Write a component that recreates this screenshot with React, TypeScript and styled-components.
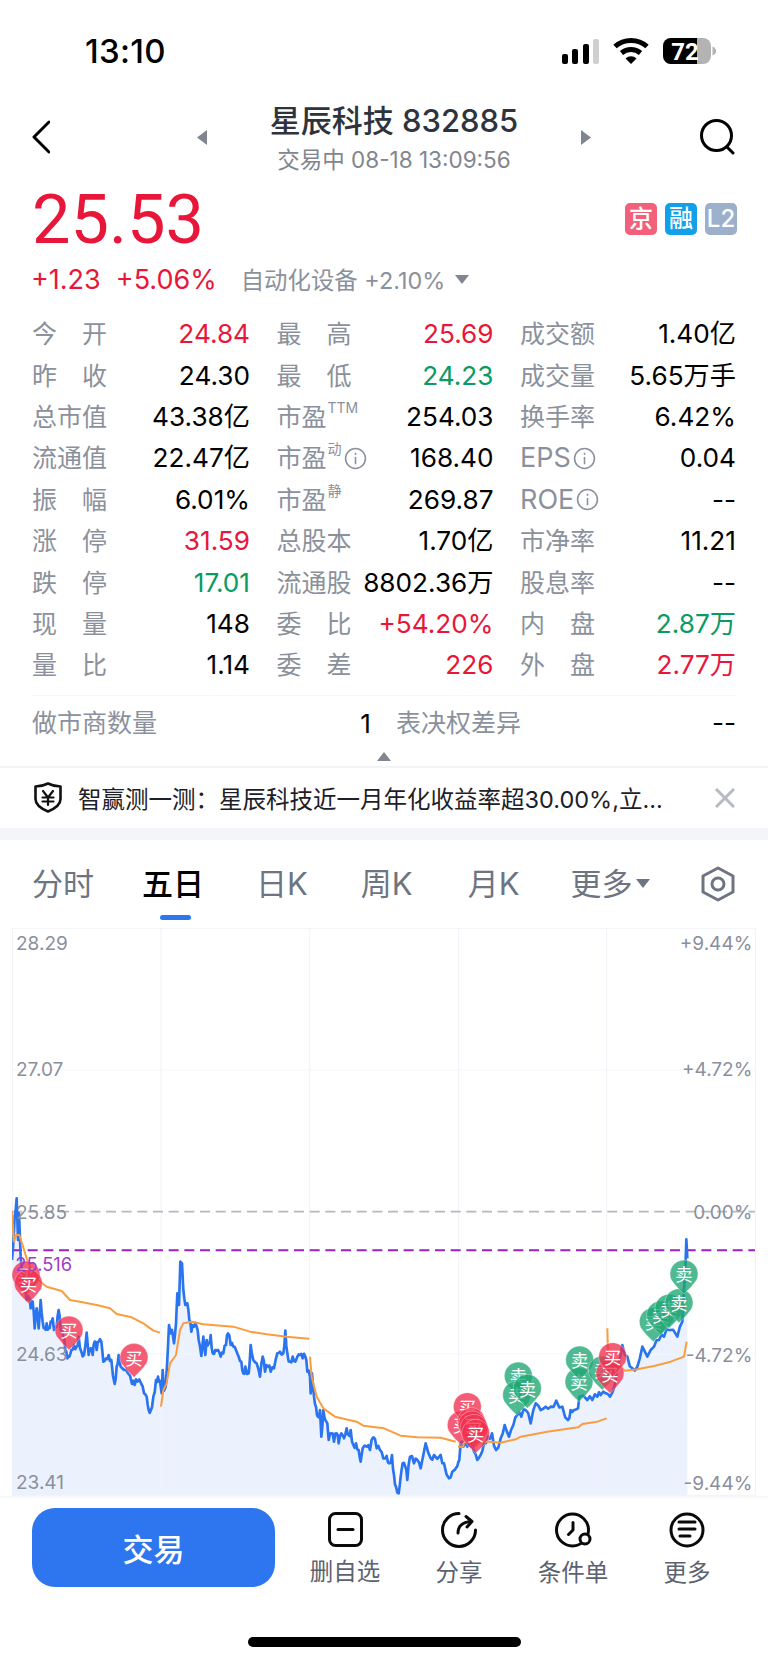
import React from "react";
import styled, { createGlobalStyle } from "styled-components";

const RED = "#e8173a";
const GREEN = "#0b9a63";
const GRAY = "#8b919c";
const FONT = `Inter, "Noto Sans CJK SC", sans-serif`;

const GlobalStyle = createGlobalStyle`
  html, body {
    margin: 0;
    padding: 0;
    background: #fff;
  }
  body {
    font-family: ${FONT};
  }
`;

const Page = styled.div`
  width: 768px;
  height: 1663px;
  overflow: hidden;
  background: #fff;
  display: flex;
  flex-direction: column;
`;

/* status bar */
const StatusBar = styled.div`
  height: 100px;
  padding: 0 52px 0 85px;
  display: flex;
  justify-content: space-between;
  align-items: flex-start;
  box-sizing: border-box;
`;

const Clock = styled.div`
  margin-top: 31px;
  font-size: 33px;
  line-height: 40px;
  font-weight: 500;
  letter-spacing: 0.3px;
  color: #000;
`;

const StatusIcons = styled.svg`
  display: block;
  margin-top: 37px;
`;

/* header */
const Header = styled.div`
  height: 78px;
  padding: 0 33px 4px 32px;
  display: flex;
  align-items: center;
  box-sizing: border-box;
`;

const IconSvg = styled.svg`
  display: block;
  flex: none;
`;

const TitleGroup = styled.div`
  width: 394px;
  margin-left: 147px;
  display: flex;
  justify-content: space-between;
  align-items: center;
`;

const TitleBlock = styled.div`
  display: flex;
  flex-direction: column;
  align-items: center;
`;

const Title = styled.div`
  font-size: 31px;
  line-height: 44px;
  font-weight: 500;
  color: #2e343d;
  white-space: nowrap;
`;

const SubTitle = styled.div`
  font-size: 22.5px;
  line-height: 30px;
  margin-top: 2px;
  color: #7f8690;
  white-space: nowrap;
`;

const Tail = styled.div`
  margin-left: auto;
`;

/* price */
const PriceRow = styled.div`
  height: 86px;
  padding: 0 31px 0 32px;
  display: flex;
  justify-content: space-between;
  align-items: center;
`;

const Price = styled.div`
  font-family: Roboto, sans-serif;
  font-size: 68.5px;
  line-height: 80px;
  margin-top: -2px;
  color: ${RED};
`;

const Badges = styled.div`
  display: flex;
  gap: 8px;
  margin-top: -4px;
`;

const Badge = styled.div<{ $bg: string }>`
  width: 32px;
  height: 32px;
  border-radius: 5px;
  background: ${(p) => p.$bg};
  color: #fff;
  font-size: 24px;
  font-weight: 500;
  line-height: 32px;
  text-align: center;
  overflow: hidden;
`;

const ChangeRow = styled.div`
  height: 30px;
  padding-left: 31px;
  display: flex;
  align-items: center;
  font-size: 27px;
  color: ${RED};
  white-space: nowrap;
`;

const Percent = styled.span`
  margin-left: 15px;
`;

const Sector = styled.span`
  margin-left: 24px;
  font-size: 23.4px;
  color: ${GRAY};
`;

const SectorArrow = styled.span`
  margin-left: 10px;
  width: 0;
  height: 0;
  border-left: 7px solid transparent;
  border-right: 7px solid transparent;
  border-top: 9px solid #7f8690;
`;

/* quote table */
const Table = styled.div`
  margin-top: 19.5px;
  padding: 0 32px;
  display: grid;
  grid-template-columns: 218px 217px 216px;
  column-gap: 26.5px;
  grid-auto-rows: 41.4px;
`;

const Cell = styled.div`
  display: flex;
  justify-content: space-between;
  align-items: center;
  white-space: nowrap;
`;

const Label = styled.div<{ $spread?: boolean }>`
  display: flex;
  align-items: center;
  justify-content: ${(p) => (p.$spread ? "space-between" : "flex-start")};
  width: ${(p) => (p.$spread ? "75px" : "auto")};
  font-size: 25px;
  line-height: 30px;
  color: ${GRAY};
`;

const Latin = styled.span`
  font-size: 27px;
`;

const Tag = styled.sup`
  font-size: 14px;
  line-height: 14px;
  align-self: flex-start;
  margin-top: -1px;
  margin-left: 1px;
  color: ${GRAY};
`;

const Value = styled.div<{ $tone?: "up" | "down" }>`
  font-size: 26.2px;
  line-height: 30px;
  color: ${(p) => (p.$tone === "up" ? RED : p.$tone === "down" ? GREEN : "#000")};
`;

const ExtraRow = styled.div`
  margin: 8.5px 32px 0 32px;
  height: 55px;
  border-top: 1px solid #f6f7f8;
  display: flex;
  align-items: center;
`;

const ExtraCount = styled.div`
  width: 214px;
  font-size: 26.2px;
  text-align: right;
  color: #000;
`;

const ExtraLabel = styled(Label)`
  margin-left: 25px;
`;

const ExtraDash = styled(Value)`
  margin-left: auto;
`;

const Collapse = styled.div`
  height: 15px;
  display: flex;
  justify-content: center;
  &::before {
    content: "";
    margin-top: 1px;
    width: 0;
    height: 0;
    border-left: 7px solid transparent;
    border-right: 7px solid transparent;
    border-bottom: 9px solid #7f8690;
  }
`;

/* banner */
const Banner = styled.div`
  height: 62px;
  border-top: 2px solid #f3f4f8;
  box-sizing: border-box;
  padding: 0 33px 0 34px;
  display: flex;
  align-items: center;
`;

const BannerText = styled.div`
  margin-left: 16px;
  font-size: 23.5px;
  color: #1d2026;
  white-space: nowrap;
`;

const Band = styled.div`
  height: 12px;
  background: #f4f5f8;
`;

/* tabs */
const Tabs = styled.div`
  height: 88px;
  padding: 0 33px 0 32px;
  display: flex;
  align-items: center;
  box-sizing: border-box;
`;

const Tab = styled.div<{ $active?: boolean; $gap?: number }>`
  position: relative;
  margin-left: ${(p) => p.$gap ?? 0}px;
  font-size: 31px;
  line-height: 44px;
  font-weight: ${(p) => (p.$active ? 500 : 400)};
  color: ${(p) => (p.$active ? "#000" : "#6e7582")};
  white-space: nowrap;
  display: flex;
  align-items: center;
  &::after {
    content: "";
    display: ${(p) => (p.$active ? "block" : "none")};
    position: absolute;
    left: 18px;
    bottom: -14px;
    width: 31px;
    height: 5px;
    border-radius: 3px;
    background: #2d76f0;
  }
`;

const TabArrow = styled.span`
  margin-left: 4px;
  width: 0;
  height: 0;
  border-left: 7px solid transparent;
  border-right: 7px solid transparent;
  border-top: 9px solid #6e7582;
`;

const TabSettings = styled.div`
  margin-left: auto;
`;

/* chart */
const ChartFrame = styled.div`
  height: 568px;
  padding-left: 12px;
`;

const ChartSvg = styled.svg`
  display: block;
  width: 744px;
  height: 568px;
  font-family: ${FONT};
`;

/* footer */
const Footer = styled.div`
  border-top: 2px solid #f6f7fb;
  padding: 10px 0 0 32px;
  display: flex;
  align-items: flex-start;
`;

const TradeButton = styled.div`
  width: 243px;
  height: 79px;
  border-radius: 23px;
  background: #2d76f0;
  color: #fff;
  font-size: 31px;
  font-weight: 500;
  display: flex;
  align-items: center;
  justify-content: center;
  margin-right: 13px;
`;

const Action = styled.div`
  width: 114px;
  display: flex;
  flex-direction: column;
  align-items: center;
  padding-top: 4px;
`;

const ActionLabel = styled.div`
  margin-top: 8px;
  font-size: 23.5px;
  line-height: 34px;
  color: #5c6270;
  white-space: nowrap;
`;

const HomeBar = styled.div`
  margin: 47px auto 0;
  width: 273px;
  height: 10px;
  border-radius: 5px;
  background: #000;
`;

const InfoSvg = styled.svg`
  display: block;
  margin-left: 2px;
`;

const Info = () => (
  <InfoSvg width="23" height="23" viewBox="0 0 22 22" fill="none" stroke={GRAY} strokeWidth="1.5">
    <circle cx="11" cy="11" r="9.5" />
    <path d="M11 9.5v7" />
    <path d="M11 5.5v2" />
  </InfoSvg>
);

type Row = { label: React.ReactNode; spread?: boolean; value: string; tone?: "up" | "down" };

const cells: Row[] = [
  { label: <><span>今</span><span>开</span></>, spread: true, value: "24.84", tone: "up" },
  { label: <><span>最</span><span>高</span></>, spread: true, value: "25.69", tone: "up" },
  { label: "成交额", value: "1.40亿" },
  { label: <><span>昨</span><span>收</span></>, spread: true, value: "24.30" },
  { label: <><span>最</span><span>低</span></>, spread: true, value: "24.23", tone: "down" },
  { label: "成交量", value: "5.65万手" },
  { label: "总市值", value: "43.38亿" },
  { label: <>市盈<Tag>TTM</Tag></>, value: "254.03" },
  { label: "换手率", value: "6.42%" },
  { label: "流通值", value: "22.47亿" },
  { label: <>市盈<Tag>动</Tag><Info /></>, value: "168.40" },
  { label: <><Latin>EPS</Latin><Info /></>, value: "0.04" },
  { label: <><span>振</span><span>幅</span></>, spread: true, value: "6.01%" },
  { label: <>市盈<Tag>静</Tag></>, value: "269.87" },
  { label: <><Latin>ROE</Latin><Info /></>, value: "--" },
  { label: <><span>涨</span><span>停</span></>, spread: true, value: "31.59", tone: "up" },
  { label: "总股本", value: "1.70亿" },
  { label: "市净率", value: "11.21" },
  { label: <><span>跌</span><span>停</span></>, spread: true, value: "17.01", tone: "down" },
  { label: "流通股", value: "8802.36万" },
  { label: "股息率", value: "--" },
  { label: <><span>现</span><span>量</span></>, spread: true, value: "148" },
  { label: <><span>委</span><span>比</span></>, spread: true, value: "+54.20%", tone: "up" },
  { label: <><span>内</span><span>盘</span></>, spread: true, value: "2.87万", tone: "down" },
  { label: <><span>量</span><span>比</span></>, spread: true, value: "1.14" },
  { label: <><span>委</span><span>差</span></>, spread: true, value: "226", tone: "up" },
  { label: <><span>外</span><span>盘</span></>, spread: true, value: "2.77万", tone: "up" },
];

// chart points are in 3x units, x from the left edge, y measured from page y 1180
const shift = (pts: string) =>
  pts
    .trim()
    .split(/\s+/)
    .map((p) => {
      const [x, y] = p.split(",");
      return `${Number(x) + 1152},${y}`;
    })
    .join(" ");

// adds a small fixed wobble between points so the price line looks tick by tick
const roughen = (pts: string, amp: number) => {
  const list = pts.split(" ").map((p) => p.split(",").map(Number));
  const out: string[] = [];
  list.forEach(([x, y], i) => {
    out.push(`${x},${y}`);
    const next = list[i + 1];
    if (next && next[0] - x > 5) {
      const wobble = Math.sin(i * 12.9898) * amp;
      out.push(`${(x + next[0]) / 2},${(y + next[1]) / 2 + wobble}`);
    }
  });
  return out.join(" ");
};

const blueLeft = `36,240 40,190 44,110 50,55 54,180 57,100 62,230 68,290 74,330 80,360 86,350 92,385 98,365 104,445 110,385 116,445 122,360 128,425 134,445 140,430 146,445 152,425 158,415 162,450 170,440 176,390 182,450 190,470 196,510 202,535 208,530 214,510 222,495 230,500 236,470 244,515 252,525 260,458 266,525 272,505 278,525 284,485 290,510 296,485 304,485 310,545 318,535 326,525 334,540 344,612 350,560 356,525 362,560 372,570 384,580 396,612 404,615 412,605 424,612 432,640 440,650 446,690 452,692 460,650 468,600 474,590 480,603 485,640 488,570 492,632 497,620 502,540 507,435 512,460 516,450 522,490 528,430 532,340 537,375 541,245 546,250 550,330 556,375 562,370 568,420 574,455 582,440 590,440 596,480 604,528 610,470 616,525 620,480 626,490 632,465 638,520 646,510 654,510 662,530 670,520 678,495 684,460 692,495 700,500 708,510 716,530 724,545 730,580 736,560 746,580 752,495 760,540 770,550 780,590 788,530 795,575 804,560 812,575 822,565 832,520 840,515 850,520 856,452 862,520 870,545 878,530 886,545 892,530 900,525 908,535 916,530 922,575 930,590 932,640 936,580 942,650 948,680 954,710 960,690 964,770 970,690 976,720 982,730 986,780 994,760 1002,785 1010,760 1016,790 1024,760 1032,775 1040,745 1046,765 1052,750 1060,795 1068,790 1076,810 1082,845 1088,805 1100,800 1110,810 1120,772 1130,805 1140,810 1150,835`;

const blueRight = shift(`0,835 8,828 16,850 24,825 30,885 36,920 44,940 50,890 56,850 64,860 70,900 78,830 90,850 100,840 110,865 125,790 140,835 150,825 170,825 180,850 195,895 205,875 220,858 226,840 230,790 238,800 250,800 262,800 270,815 280,840 290,825 300,790 312,770 324,760 336,810 350,775 362,735 375,770 388,735 400,705 412,710 425,690 440,730 455,670 470,690 485,680 500,680 517,662 535,680 552,720 560,690 570,690 582,685 586,650 610,660 625,660 640,650 650,645 665,640 678,650 690,625 700,560 715,495 730,530 745,565 760,560 775,500 790,530 810,500 825,480 840,470 855,450 880,470 895,425 900,330 905,240 907,178 910,235`);

const blueLine = roughen(`${blueLeft} ${blueRight}`, 12);
const blueFill = `${blueLine} 2062,945 36,945`;

const orangeSegments = [
  "36,95 42,185 48,165 58,165 66,190 80,235 95,270 115,300 140,320 185,333 210,360 240,365 290,375 330,385 350,402 395,412 430,430 460,452 480,458",
  "483,680 490,630 500,610 510,550 528,525 540,450 550,430 575,425 610,433 700,440 750,455 800,463 860,470 928,476",
  `930,530 935,590 950,650 970,685 1005,710 1070,725 1090,737 1152,745 ${shift("50,767 100,772 170,773 215,785")}`,
  shift("222,800 238,800 240,785 315,785 350,788 395,778 410,770 490,755 582,742 595,732 640,725 668,715"),
  shift("670,445 672,520 722,572 760,568 810,558 860,545 900,530 908,485"),
];

const verticals = [483, 929, 1376, 1820];
const horizontals = [-330, 522];

const pins: { x: number; y: number; buy: boolean }[] = [
  { x: 78, y: 285, buy: true },
  { x: 85, y: 310, buy: true },
  { x: 207, y: 450, buy: true },
  { x: 402, y: 532, buy: true },
  { x: 1384, y: 735, buy: true },
  { x: 1402, y: 680, buy: true },
  { x: 1414, y: 725, buy: true },
  { x: 1417, y: 735, buy: true },
  { x: 1422, y: 745, buy: true },
  { x: 1427, y: 760, buy: true },
  { x: 1555, y: 588, buy: false },
  { x: 1550, y: 645, buy: false },
  { x: 1582, y: 625, buy: false },
  { x: 1737, y: 605, buy: false },
  { x: 1739, y: 540, buy: false },
  { x: 1807, y: 570, buy: false },
  { x: 1830, y: 580, buy: true },
  { x: 1838, y: 530, buy: true },
  { x: 1960, y: 425, buy: false },
  { x: 1982, y: 405, buy: false },
  { x: 2007, y: 385, buy: false },
  { x: 2037, y: 368, buy: false },
  { x: 2052, y: 282, buy: false },
];

const Pin = ({ x, y, buy }: { x: number; y: number; buy: boolean }) => (
  <g transform={`translate(${x} ${y})`}>
    <path
      d="M-38 18A42 42 0 1 1 38 18Q23 40 0 60Q-23 40 -38 18Z"
      fill={buy ? "#f1304e" : "#1ea573"}
      fillOpacity="0.78"
      stroke="#fff"
      strokeOpacity="0.35"
      strokeWidth="3"
    />
    <text x="0" y="2" fontSize="52" fill="#fff" textAnchor="middle" dominantBaseline="central">
      {buy ? "买" : "卖"}
    </text>
  </g>
);

const axisLeft = [
  { text: "28.29", y: -711 },
  { text: "27.07", y: -333 },
  { text: "25.85", y: 97 },
  { text: "24.63", y: 522 },
  { text: "23.41", y: 908 },
];

const axisRight = [
  { text: "+9.44%", y: -711 },
  { text: "+4.72%", y: -333 },
  { text: "0.00%", y: 97 },
  { text: "-4.72%", y: 525 },
  { text: "-9.44%", y: 910 },
];

const Chart = () => (
  <ChartSvg viewBox="36 -756 2232 1704">
    <rect x="37" y="-755" width="2229" height="1701" fill="#fff" stroke="#f1f2f7" strokeWidth="3" />
    <polygon points={blueFill} fill="#ebf2fd" />
    {verticals.map((x) => (
      <line key={x} x1={x} x2={x} y1="-756" y2="945" stroke="#f1f2f8" strokeWidth="3" />
    ))}
    {horizontals.map((y) => (
      <line key={y} x1="36" x2="2265" y1={y} y2={y} stroke="#f4f5f9" strokeWidth="3" />
    ))}
    <line x1="36" x2="2265" y1="95" y2="95" stroke="#b4b8c0" strokeWidth="5" strokeDasharray="30 17" />
    <line x1="36" x2="2265" y1="211" y2="211" stroke="#9a22c4" strokeWidth="6" strokeDasharray="30 17" />
    <polyline points={blueLine} fill="none" stroke="#2b74ef" strokeWidth="8" strokeLinejoin="round" />
    {orangeSegments.map((pts) => (
      <polyline key={pts} points={pts} fill="none" stroke="#fb9c3f" strokeWidth="6" strokeLinejoin="round" />
    ))}
    {axisLeft.map((a) => (
      <text key={a.text} x="48" y={a.y} fontSize="57" fill="#8a8f9c" dominantBaseline="central">
        {a.text}
      </text>
    ))}
    {axisRight.map((a) => (
      <text key={a.text} x="2257" y={a.y} fontSize="57" fill="#8a8f9c" textAnchor="end" dominantBaseline="central">
        {a.text}
      </text>
    ))}
    {pins.map((p) => (
      <Pin key={`${p.x}-${p.y}`} x={p.x} y={p.y} buy={p.buy} />
    ))}
    <text x="46" y="253" fontSize="55" fill="#a03cc6" dominantBaseline="central">
      25.516
    </text>
  </ChartSvg>
);

const App = () => (
  <Page>
    <GlobalStyle />
    <StatusBar>
      <Clock>13:10</Clock>
      <StatusIcons width="155" height="30" viewBox="0 0 155 30">
        <rect x="1" y="17" width="6" height="10" rx="2" fill="#000" />
        <rect x="11" y="12" width="6" height="15" rx="2" fill="#000" />
        <rect x="22" y="7" width="6" height="20" rx="2" fill="#000" />
        <rect x="32" y="2" width="6" height="25" rx="2" fill="#cfcfcf" />
        <path d="M54 9.5A24 24 0 0 1 86 9.5" fill="none" stroke="#000" strokeWidth="5" />
        <path d="M60.5 16A15 15 0 0 1 79.5 16" fill="none" stroke="#000" strokeWidth="5" />
        <path d="M70 27L64.5 21.5A8 8 0 0 1 75.5 21.5Z" fill="#000" />
        <rect x="102" y="1" width="48" height="26" rx="8" fill="#b3b3b3" />
        <path d="M110 1H136V27H110A8 8 0 0 1 102 19V9A8 8 0 0 1 110 1Z" fill="#000" />
        <path d="M151.5 9.5V18.5C154 17.5 155 16 155 14C155 12 154 10.5 151.5 9.5Z" fill="#b3b3b3" />
        <text x="124" y="22.5" fontSize="24" fontWeight="700" fill="#fff" textAnchor="middle" fontFamily="Roboto, sans-serif">
          72
        </text>
      </StatusIcons>
    </StatusBar>

    <Header>
      <IconSvg width="18" height="34" viewBox="0 0 18 34" fill="none" stroke="#000" strokeWidth="3" strokeLinecap="round" strokeLinejoin="round">
        <path d="M17 2L2 17L17 32" />
      </IconSvg>
      <TitleGroup>
        <IconSvg width="10" height="15" viewBox="0 0 10 15">
          <path d="M10 0V15L0 7.5Z" fill="#7f8690" />
        </IconSvg>
        <TitleBlock>
          <Title>星辰科技 832885</Title>
          <SubTitle>交易中 08-18 13:09:56</SubTitle>
        </TitleBlock>
        <IconSvg width="10" height="15" viewBox="0 0 10 15">
          <path d="M0 0V15L10 7.5Z" fill="#7f8690" />
        </IconSvg>
      </TitleGroup>
      <Tail>
        <IconSvg width="35" height="36" viewBox="0 0 35 36" fill="none" stroke="#000" strokeWidth="3" strokeLinecap="round">
          <circle cx="16.5" cy="16.5" r="15" />
          <path d="M27 28L33 34" />
        </IconSvg>
      </Tail>
    </Header>

    <PriceRow>
      <Price>25.53</Price>
      <Badges>
        <Badge $bg="#f2607a">京</Badge>
        <Badge $bg="#13a0ea">融</Badge>
        <Badge $bg="#9cb0cc">L2</Badge>
      </Badges>
    </PriceRow>

    <ChangeRow>
      +1.23
      <Percent>+5.06%</Percent>
      <Sector>自动化设备 +2.10%</Sector>
      <SectorArrow />
    </ChangeRow>

    <Table>
      {cells.map((c, i) => (
        <Cell key={i}>
          <Label $spread={c.spread}>{c.label}</Label>
          <Value $tone={c.tone}>{c.value}</Value>
        </Cell>
      ))}
    </Table>

    <ExtraRow>
      <Label>做市商数量</Label>
      <ExtraCount>1</ExtraCount>
      <ExtraLabel>表决权差异</ExtraLabel>
      <ExtraDash>--</ExtraDash>
    </ExtraRow>
    <Collapse />

    <Banner>
      <IconSvg width="28" height="31" viewBox="0 0 28 31" fill="none" stroke="#111" strokeWidth="2.6" strokeLinejoin="round" strokeLinecap="round">
        <path d="M14 1.5C18 3.5 22 4.5 26.5 4.5V17C26.5 22.5 20 27 14 29.5C8 27 1.5 22.5 1.5 17V4.5C6 4.5 10 3.5 14 1.5Z" />
        <path d="M9 9L14 15.5L19 9M14 15.5V23M8.5 15.5H19.5M8.5 19.5H19.5" strokeWidth="2.2" />
      </IconSvg>
      <BannerText>智赢测一测：星辰科技近一月年化收益率超30.00%,立...</BannerText>
      <Tail>
        <IconSvg width="20" height="20" viewBox="0 0 20 20" fill="none" stroke="#b5bac4" strokeWidth="3">
          <path d="M1 1L19 19M19 1L1 19" />
        </IconSvg>
      </Tail>
    </Banner>
    <Band />

    <Tabs>
      <Tab>分时</Tab>
      <Tab $active $gap={48}>五日</Tab>
      <Tab $gap={52}>日K</Tab>
      <Tab $gap={53}>周K</Tab>
      <Tab $gap={55}>月K</Tab>
      <Tab $gap={51}>
        更多
        <TabArrow />
      </Tab>
      <TabSettings>
        <IconSvg width="34" height="36" viewBox="0 0 34 36" fill="none" stroke="#6e7582" strokeWidth="3" strokeLinejoin="round">
          <path d="M17 2L32 10V26L17 34L2 26V10Z" />
          <circle cx="17" cy="18" r="6" />
        </IconSvg>
      </TabSettings>
    </Tabs>

    <ChartFrame>
      <Chart />
    </ChartFrame>

    <Footer>
      <TradeButton>交易</TradeButton>
      <Action>
        <IconSvg width="35" height="35" viewBox="0 0 35 35" fill="none" stroke="#0a0a0a" strokeWidth="3" strokeLinecap="round">
          <rect x="1.5" y="1.5" width="32" height="32" rx="6" />
          <path d="M10 17.5H25" />
        </IconSvg>
        <ActionLabel>删自选</ActionLabel>
      </Action>
      <Action>
        <IconSvg width="36" height="36" viewBox="0 0 36 36" fill="none" stroke="#0a0a0a" strokeWidth="3" strokeLinecap="round" strokeLinejoin="round">
          <path d="M18 1.5A16.5 16.5 0 1 0 34.5 18" />
          <path d="M17 21C17 15 21 10 30 9.5" />
          <path d="M25 4.5L31 9.5L26 15" />
        </IconSvg>
        <ActionLabel>分享</ActionLabel>
      </Action>
      <Action>
        <IconSvg width="37" height="36" viewBox="0 0 37 36" fill="none" stroke="#0a0a0a" strokeWidth="3" strokeLinecap="round" strokeLinejoin="round">
          <circle cx="17.5" cy="18" r="16" />
          <path d="M18 10.5V18L13.5 22.5" />
          <circle cx="30" cy="27" r="5" fill="#fff" />
        </IconSvg>
        <ActionLabel>条件单</ActionLabel>
      </Action>
      <Action>
        <IconSvg width="36" height="36" viewBox="0 0 36 36" fill="none" stroke="#0a0a0a" strokeWidth="3" strokeLinecap="round">
          <circle cx="18" cy="18" r="16" />
          <path d="M10 10H26M10 17H26M11 24H21" />
        </IconSvg>
        <ActionLabel>更多</ActionLabel>
      </Action>
    </Footer>
    <HomeBar />
  </Page>
);

export default App;
